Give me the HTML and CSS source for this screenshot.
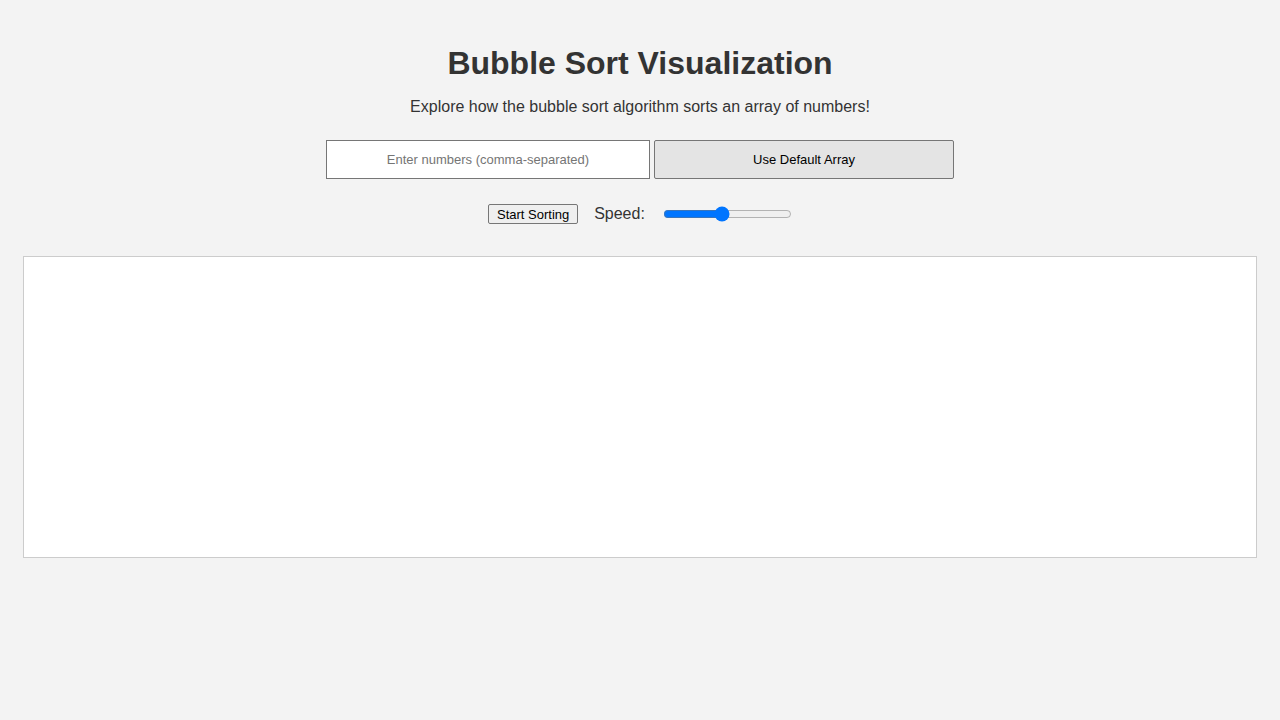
FILE: index.html
```html
<!DOCTYPE html>
<html lang="en">
<head>
<meta charset="utf-8">
<title>Bubble Sort Visualization</title>
<link rel="stylesheet" href="styles.css">
</head>
<body>
<main class="page">
  <h1 class="title">Bubble Sort Visualization</h1>
  <p class="subtitle">Explore how the bubble sort algorithm sorts an array of numbers!</p>
  <div class="input-row">
    <input class="num-input" type="text" placeholder="Enter numbers (comma-separated)">
    <button class="default-btn" type="button">Use Default Array</button>
  </div>
  <div class="controls">
    <button class="start-btn" type="button">Start Sorting</button>
    <label class="speed-label" for="speed">Speed:</label>
    <input class="speed" id="speed" type="range" min="1" max="100" value="46">
  </div>
  <div class="canvas"></div>
</main>
</body>
</html>
```
FILE: styles.css
```css
html, body {
  margin: 0;
  padding: 0;
  background: #f3f3f3;
}
body {
  font-family: "Liberation Sans", Arial, sans-serif;
  color: #333;
}
.page {
  padding: 45px 23px 0;
  display: flex;
  flex-direction: column;
  align-items: center;
}
.title {
  margin: 0;
  font-size: 32px;
  line-height: 37px;
  font-weight: bold;
  color: #333;
}
.subtitle {
  margin: 16px 0 0;
  font-size: 16px;
  line-height: 18px;
}
.input-row {
  margin-top: 24px;
  display: flex;
  gap: 4px;
}
.num-input {
  box-sizing: border-box;
  width: 324px;
  height: 39px;
  border: 1px solid #767676;
  border-radius: 0;
  background: #fff;
  font-family: "Liberation Sans", Arial, sans-serif;
  font-size: 13px;
  text-align: center;
  padding: 0 8px;
  color: #000;
}
.num-input::placeholder {
  color: #757575;
}
.default-btn {
  box-sizing: border-box;
  width: 300px;
  height: 39px;
  border: 1px solid #767676;
  border-radius: 2px;
  background: #e4e4e4;
  font-family: "Liberation Sans", Arial, sans-serif;
  font-size: 13px;
  color: #000;
}
.controls {
  margin-top: 25px;
  display: flex;
  align-items: center;
  height: 20px;
}
.start-btn {
  box-sizing: border-box;
  width: 90px;
  height: 20px;
  padding: 0;
  font-family: "Liberation Sans", Arial, sans-serif;
  font-size: 13px;
  color: #000;
  background: #efefef;
  border: 1px solid #767676;
  border-radius: 2px;
}
.speed-label {
  margin-left: 16px;
  font-size: 16px;
  color: #333;
}
.speed {
  margin: 0 0 0 18px;
  width: 129px;
  accent-color: #0075ff;
}
.canvas {
  margin-top: 32px;
  align-self: stretch;
  height: 300px;
  background: #fff;
  border: 1px solid #ccc;
}
```
